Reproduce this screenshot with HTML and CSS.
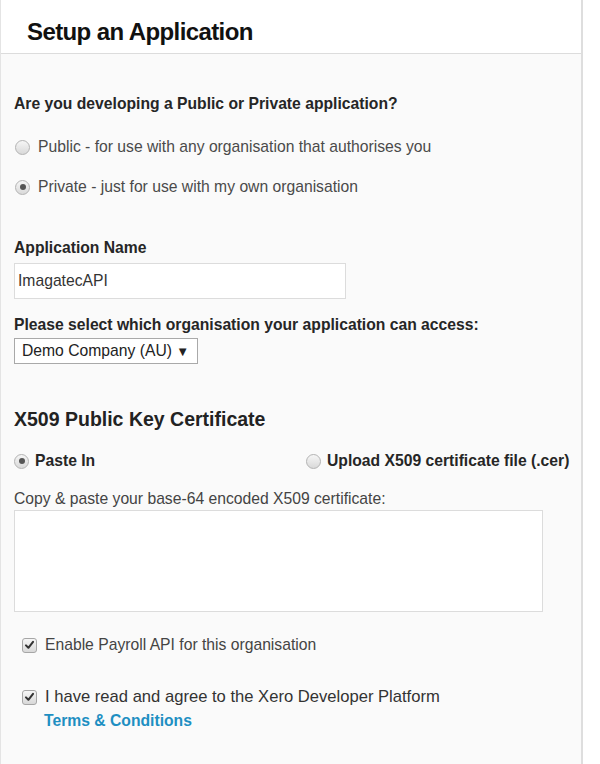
FILE: index.html
```html
<!DOCTYPE html>
<html>
<head>
<meta charset="utf-8">
<link rel="stylesheet" href="styles.css">
</head>
<body>
<div class="panel">
  <div class="header">
    <h1 class="title">Setup an Application</h1>
  </div>
  <div class="content">
    <div class="question">Are you developing a Public or Private application?</div>
    <label class="radio-row r1"><span class="radio"></span><span class="opt">Public - for use with any organisation that authorises you</span></label>
    <label class="radio-row r2"><span class="radio checked"></span><span class="opt">Private - just for use with my own organisation</span></label>

    <div class="field-label app-label">Application Name</div>
    <div class="text-input">ImagatecAPI</div>

    <div class="field-label org-label">Please select which organisation your application can access:</div>
    <div class="select"><span>Demo Company (AU)</span><span class="arrow">▼</span></div>

    <h2 class="section">X509 Public Key Certificate</h2>
    <div class="cert-row">
      <label class="cert-opt"><span class="radio checked"></span><span>Paste In</span></label>
      <label class="cert-opt"><span class="radio"></span><span>Upload X509 certificate file (.cer)</span></label>
    </div>
    <div class="copy-label">Copy &amp; paste your base-64 encoded X509 certificate:</div>
    <div class="textarea"></div>

    <label class="check-row c1"><span class="checkbox"><svg viewBox="0 0 14 14" width="14" height="14"><path d="M3.2 7.4 L5.8 10 L10.8 3.6" fill="none" stroke="#333" stroke-width="2.2" stroke-linecap="round" stroke-linejoin="round"/></svg></span><span class="check-text">Enable Payroll API for this organisation</span></label>
    <label class="check-row c2"><span class="checkbox"><svg viewBox="0 0 14 14" width="14" height="14"><path d="M3.2 7.4 L5.8 10 L10.8 3.6" fill="none" stroke="#333" stroke-width="2.2" stroke-linecap="round" stroke-linejoin="round"/></svg></span><span class="check-text">I have read and agree to the Xero Developer Platform</span></label>
    <a class="terms">Terms &amp; Conditions</a>
  </div>
</div>
</body>
</html>
```
FILE: styles.css
```css
html, body {
  margin: 0;
  padding: 0;
  background: #ffffff;
}
body {
  font-family: "Liberation Sans", Arial, sans-serif;
  font-size: 15.7px;
  color: #333;
}
.panel {
  width: 580px;
  height: 764px;
  border-left: 1px solid #e4e4e4;
  border-right: 2px solid #dedede;
  background: #fafafa;
  display: flex;
  flex-direction: column;
}
.header {
  height: 53px;
  background: #ffffff;
  border-bottom: 1px solid #dcdcdc;
  padding-left: 26px;
  box-sizing: content-box;
}
.title {
  margin: 0;
  padding-top: 18px;
  font-size: 24px;
  line-height: 28px;
  letter-spacing: -0.6px;
  font-weight: bold;
  color: #111;
}
.content {
  padding-left: 13px;
  display: flex;
  flex-direction: column;
  align-items: flex-start;
}
.question {
  margin-top: 41px;
  line-height: 18px;
  font-weight: bold;
  color: #262626;
}
.radio-row {
  display: flex;
  align-items: center;
  line-height: 18px;
  color: #4a4a4a;
}
.r1 { margin-top: 25px; }
.r2 { margin-top: 22px; }
.radio-row .radio { margin-left: 1px; margin-right: 8px; }
.radio {
  display: inline-block;
  width: 13px;
  height: 13px;
  border-radius: 50%;
  border: 1px solid #b3b3b3;
  background: linear-gradient(#f6f6f6, #d9d9d9);
  flex: none;
  position: relative;
}
.radio.checked::after {
  content: "";
  position: absolute;
  left: 3.5px;
  top: 3.5px;
  width: 6px;
  height: 6px;
  border-radius: 50%;
  background: #555;
}
.field-label {
  line-height: 18px;
  font-weight: bold;
  color: #262626;
}
.app-label { margin-top: 43px; }
.text-input {
  margin-top: 6px;
  width: 327px;
  height: 34px;
  border: 1px solid #dcdcdc;
  background: #fff;
  padding-left: 3px;
  line-height: 34px;
  color: #333;
}
.org-label { margin-top: 17px; }
.select {
  margin-top: 4px;
  width: 182px;
  height: 24px;
  border: 1px solid #a9a9a9;
  background: #fff;
  display: flex;
  align-items: center;
  box-sizing: content-box;
  color: #222;
}
.select span:first-child { margin-left: 7px; }
.select .arrow {
  margin-left: auto;
  margin-right: 8px;
  font-size: 13px;
  color: #222;
}
.section {
  margin: 44px 0 0 0;
  font-size: 19.5px;
  line-height: 22px;
  font-weight: bold;
  color: #222;
}
.cert-row {
  margin-top: 22px;
  display: grid;
  grid-template-columns: 292px auto;
  line-height: 18px;
  font-weight: bold;
  color: #262626;
}
.cert-opt {
  display: flex;
  align-items: center;
}
.cert-opt .radio { margin-right: 6px; }
.copy-label {
  margin-top: 20px;
  line-height: 18px;
  color: #444;
}
.textarea {
  margin-top: 2px;
  width: 527px;
  height: 100px;
  border: 1px solid #dcdcdc;
  background: #fff;
}
.check-row {
  display: flex;
  align-items: center;
  line-height: 18px;
  margin-left: 8px;
  color: #444;
}
.c1 { margin-top: 24px; }
.c2 { margin-top: 34px; color: #333; font-size: 16.6px; }
.checkbox {
  width: 13px;
  height: 13px;
  border: 1px solid #a6a6a6;
  border-radius: 3px;
  background: linear-gradient(#f6f6f6, #d8d8d8);
  margin-right: 8px;
  display: flex;
  align-items: center;
  justify-content: center;
  flex: none;
}
.checkbox svg { display: block; }
.terms {
  margin-top: 6px;
  margin-left: 30px;
  line-height: 18px;
  font-weight: bold;
  color: #1e8fc2;
}
```
